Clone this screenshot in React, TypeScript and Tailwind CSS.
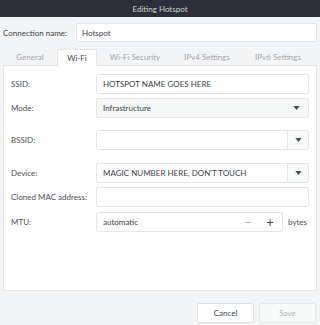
const Caret = () => (
  <svg width="7" height="4" viewBox="0 0 8 5" className="fill-[#4a4d52]">
    <path d="M0 0h8L4 5z" />
  </svg>
);

const Row = ({ label, children, className = "" }: { label: string; children: React.ReactNode; className?: string }) => (
  <div className={"flex items-center " + className}>
    <div className="w-[85px] shrink-0 text-[#4d5055]">{label}</div>
    <div className="flex-1 flex items-center">{children}</div>
  </div>
);

const App = () => {
  const tabs = [
    { t: "General", w: "w-[54px]" },
    { t: "Wi-Fi", w: "w-[40px]" },
    { t: "Wi-Fi Security", w: "w-[76px]" },
    { t: "IPv4 Settings", w: "w-[68px]" },
    { t: "IPv6 Settings", w: "w-[74px]" },
  ];
  return (
    <div
      className="w-[320px] h-[325px] bg-[#f3f4f5] flex flex-col text-[8px] text-[#3c3f44] whitespace-nowrap"
      style={{ fontFamily: 'Lato, "Noto Sans", sans-serif' }}
    >
      <div className="h-[17px] bg-[#2c2f37] text-[#d0d2d5] flex items-center justify-center">
        Editing Hotspot
      </div>

      <div className="flex items-center mt-[6px] px-[3px]">
        <div className="w-[73px] text-[#3c3f44]">Connection name:</div>
        <div className="flex-1 h-[19px] bg-white border border-[#e3e5e7] rounded-[2px] flex items-center pl-[5px] text-[#3c3f44]">
          Hotspot
        </div>
      </div>

      <div className="flex mt-[6px] px-[3px] h-[17px] items-end">
        {tabs.map(({ t, w }, i) => (
          <div
            key={t}
            className={
              "h-[17px] flex items-center justify-center " +
              w +
              (i === 1
                ? " bg-white text-[#3c3f44] border-t border-x border-[#e3e5e7] rounded-t-[2px] relative top-[1px]"
                : " text-[#a3a6aa]")
            }
          >
            {t}
          </div>
        ))}
      </div>

      <div className="mx-[3px] h-[226px] bg-white border border-[#e3e5e7] px-[7px] pt-[8px]">
        <Row label="SSID:">
          <div className="w-full h-[20px] border border-[#e3e5e7] rounded-[2px] flex items-center pl-[6px]">
            HOTSPOT NAME GOES HERE
          </div>
        </Row>
        <Row label="Mode:" className="mt-[4px]">
          <div className="w-full h-[20px] border border-[#e3e5e7] bg-[#f6f7f7] rounded-[2px] flex items-center pl-[6px] pr-[8px] justify-between">
            <span>Infrastructure</span>
            <Caret />
          </div>
        </Row>
        <Row label="BSSID:" className="mt-[12px]">
          <div className="w-full h-[20px] border border-[#e3e5e7] rounded-[2px] flex">
            <div className="flex-1" />
            <div className="w-[21px] border-l border-[#e3e5e7] bg-[#f8f9f9] flex items-center justify-center">
              <Caret />
            </div>
          </div>
        </Row>
        <Row label="Device:" className="mt-[13px]">
          <div className="w-full h-[20px] border border-[#e3e5e7] rounded-[2px] flex">
            <div className="flex-1 flex items-center pl-[6px]">MAGIC NUMBER HERE, DON'T TOUCH</div>
            <div className="w-[21px] border-l border-[#e3e5e7] bg-[#f8f9f9] flex items-center justify-center">
              <Caret />
            </div>
          </div>
        </Row>
        <Row label="Cloned MAC address:" className="mt-[4px]">
          <div className="w-full h-[20px] border border-[#e3e5e7] rounded-[2px]" />
        </Row>
        <Row label="MTU:" className="mt-[5px]">
          <div className="w-[187px] h-[20px] border border-[#e3e5e7] rounded-[2px] flex items-center pl-[6px]">
            <span className="flex-1">automatic</span>
            <span className="w-[22px] text-center text-[12px] text-[#a3a6aa] leading-none">−</span>
            <span className="w-[22px] mr-[1px] text-center text-[13px] text-[#3c3f44] leading-none">+</span>
          </div>
          <span className="ml-[5px] text-[#4d5055]">bytes</span>
        </Row>
      </div>

      <div className="flex justify-end gap-[5px] pr-[4px] mt-[12px]">
        <div className="w-[57px] h-[20px] bg-white border border-[#dfe1e3] rounded-[2px] flex items-center justify-center text-[#3c3f44]">
          Cancel
        </div>
        <div className="w-[57px] h-[20px] bg-[#f8f9f9] border border-[#e6e8ea] rounded-[2px] flex items-center justify-center text-[#b4b7ba]">
          Save
        </div>
      </div>
    </div>
  );
};

export default App;
